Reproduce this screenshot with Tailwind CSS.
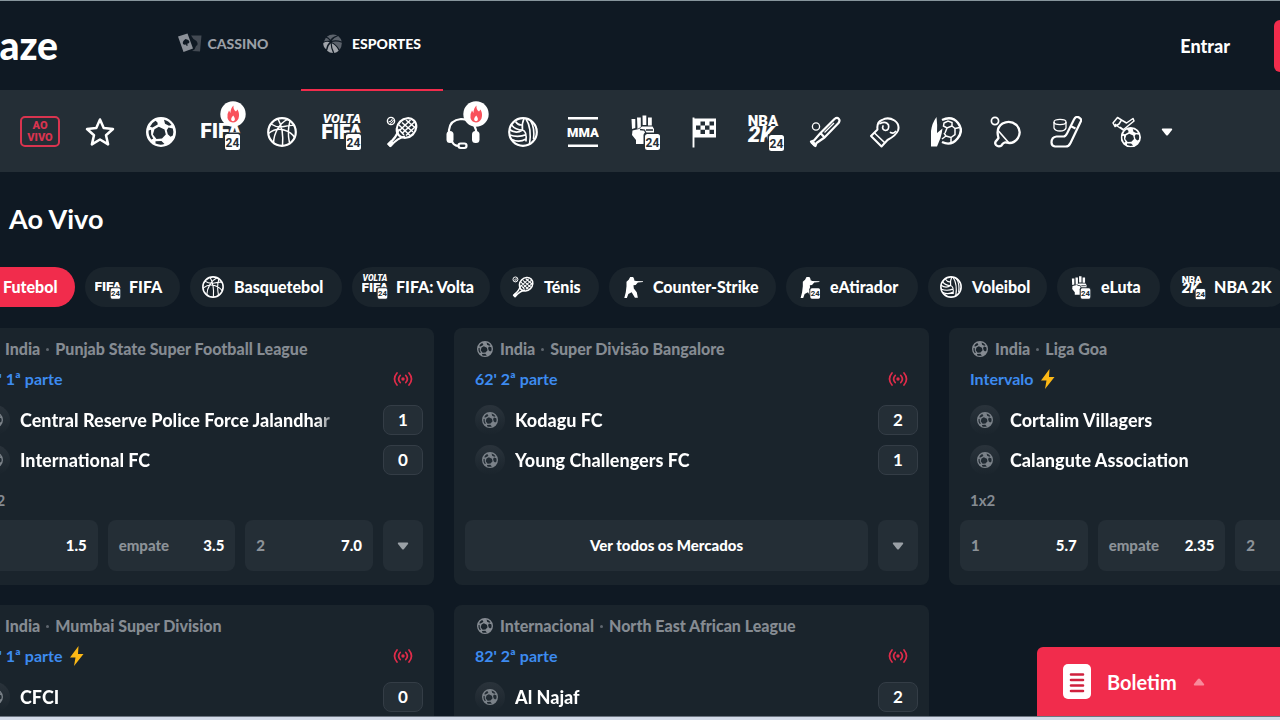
<!DOCTYPE html>
<html lang="pt-BR">
<head>
<meta charset="utf-8">
<meta name="viewport" content="width=device-width, initial-scale=1">
<title>Blaze - Esportes ao vivo</title>
<script src="https://cdn.jsdelivr.net/npm/@tailwindcss/browser@4"></script>
</head>
<body class="h-screen overflow-hidden bg-[#0f1923] font-['Lato','Open_Sans',sans-serif] text-white">

<!-- Icon set -->
<svg class="hidden" aria-hidden="true">
  <symbol id="i-star" viewBox="0 0 32 32"><path d="M16 3.5l3.7 8.6 9.3.9-7 6.2 2.1 9.2-8.1-4.9-8.1 4.9L10 19.2 3 13l9.300-.9z" fill="none" stroke="currentColor" stroke-width="2.500" stroke-linejoin="round"/></symbol>
  <symbol id="i-soccer" viewBox="0 0 30 30"><path fill="currentColor" fill-rule="evenodd" d="M15 0a15 15 0 1 1 0 30a15 15 0 1 1 0-30zM9.500 3.800L11.500 5.500 11.700 7.500 6.500 10.500 4 9.800Q6 5.500 9.500 3.800zM18 2.800Q22.500 3.800 25.500 8L23 8.800 19 6.800zM8.500 12.200L12.800 9.800 18.500 12.500 19.800 17.500 16 21.500 10.500 22 6.900 17.500zM22.500 10.500L26.800 11.500Q28 15 26.800 18.500L24.500 19.800 21.800 17.300 20.800 13.200zM2.600 13.500L5 12.800 5.200 17.800 7.300 21.800 5.200 22.500Q2.200 18.500 2.600 13.500zM9.500 24.200L15.500 24 18.500 27Q14 28.500 9.500 26.500z"/></symbol>
  <symbol id="i-basket" viewBox="0 0 30 30"><g fill="none" stroke="currentColor"><circle cx="15" cy="15" r="13.800" stroke-width="2.200"/><path stroke-width="1.500" d="M11 1.800C14 7 16.500 17 15.500 28.800M20.500 2.300C13 6 7 15 6.500 26M4 7Q10 11 17 9.500T27.500 8.500M1.500 16.500Q9 10.500 17 13T27.500 20.500M23 4Q20 14 22.500 26"/></g></symbol>
  <symbol id="i-tennis" viewBox="0 0 32 32"><g fill="none" stroke="currentColor"><ellipse cx="20.500" cy="12" rx="10.500" ry="9" transform="rotate(-45 20.500 12)" stroke-width="2.200"/><path stroke-width="1.500" d="M16 6.500L27 16M13 9L24 19.500M20 4L29.500 12M12.500 13L18 19M13.500 14.500L24.500 4M16.500 17L28.500 6M20 19.500L30 10"/><path d="M12.300 14Q11 21 2.500 28l2 2Q12 21.500 19 20.500" stroke-width="2.200" stroke-linejoin="round"/><path d="M2.500 29.500l4-4" stroke-width="4"/><circle cx="5" cy="5" r="3.600" stroke-width="1.400"/><path d="M2.500 6Q5.500 6 6.500 2.500M4 7.500Q6.500 7 7.500 4" stroke-width="1"/></g></symbol>
  <symbol id="i-headset" viewBox="0 0 36 36"><g fill="none" stroke="currentColor" stroke-width="2.200"><path d="M4 20V16Q5 6 16 5Q28 5 31 16v4"/><path d="M6.500 26Q8 32 14 32"/><rect x="13.500" y="29.500" width="8" height="4.500" rx="2.200"/></g><rect x="1.500" y="17" width="7" height="12" rx="3.500" fill="currentColor"/><rect x="27" y="17" width="7.500" height="12" rx="3.500" fill="currentColor"/></symbol>
  <symbol id="i-volley" viewBox="0 0 30 30"><g fill="none" stroke="currentColor"><circle cx="15" cy="15" r="13.800" stroke-width="2.200"/><path stroke-width="1.600" d="M14.500 13Q13.500 7 16 1.500M14.500 13Q7.500 13 3.500 8M14 8Q10 8.500 7.500 4.500M18 2Q24 11 21.500 27.500M22.500 3.500Q27 11 25.500 22M14.500 13Q19 14 18 24.500M14.500 13Q8 17.500 1.500 12.500M2 18Q10 21 18.500 17.500M4 22.500Q11 26 18 22"/></g></symbol>
  <symbol id="i-badge24" viewBox="0 0 16 17"><rect x=".5" y=".5" width="15" height="16" rx="2.500" fill="#fff"/><text x="8" y="13" text-anchor="middle" font-family="Roboto, sans-serif" font-weight="700" font-size="12" fill="#242e36">24</text></symbol>
  <symbol id="i-fifa" viewBox="0 0 40 40"><text x="20" y="25.500" text-anchor="middle" font-family="Roboto, sans-serif" font-weight="900" font-size="21" fill="currentColor">FIFA</text><rect x="22.500" y="20.500" width="18" height="19" rx="3" fill="#242e36"/><use href="#i-badge24" x="23.500" y="21.500" width="16" height="17"/></symbol>
  <symbol id="i-volta" viewBox="0 0 40 40"><text x="20" y="10.500" text-anchor="middle" font-family="Roboto, sans-serif" font-weight="900" font-style="italic" font-size="13" fill="currentColor">VOLTA</text><text x="20" y="27" text-anchor="middle" font-family="Roboto, sans-serif" font-weight="900" font-size="21" fill="currentColor">FIFA</text><rect x="22.500" y="20.500" width="18" height="19" rx="3" fill="#242e36"/><use href="#i-badge24" x="23.500" y="21.500" width="16" height="17"/></symbol>
  <symbol id="i-nba" viewBox="0 0 40 40"><text x="18" y="13.500" text-anchor="middle" font-family="Roboto, sans-serif" font-weight="900" font-size="15" fill="currentColor">NBA</text><text x="16" y="29.500" text-anchor="middle" font-family="Roboto, sans-serif" font-weight="900" font-style="italic" font-size="22" fill="currentColor">2K</text><rect x="22.500" y="21.500" width="18" height="19" rx="3" fill="#242e36"/><use href="#i-badge24" x="23.500" y="22.500" width="16" height="17"/></symbol>
  <symbol id="i-mma" viewBox="0 0 32 32"><path d="M1 2.200h30M1 29.800h30" stroke="currentColor" stroke-width="2.400"/><text x="16" y="20.500" text-anchor="middle" font-family="Roboto, sans-serif" font-weight="900" font-size="13" fill="currentColor">MMA</text></symbol>
  <symbol id="i-fist" viewBox="0 0 40 40"><path fill="currentColor" d="M7.500 7h3.800v9l-3.300 1zM13 5.500h3.800V15l-3.300 2zM18.500 3.500h3.800V13h-3.600zM24 5.500h3.800v8H24zM8.500 18.500l6.500-1.500 3-2.500h10.500L30 17v6l-4 9H12v-4L8 23z"/><path d="M16 17.500l4.500.5 1.500 3.500M22 18h7" stroke="#242e36" stroke-width="1.300" fill="none"/><rect x="19.500" y="20.500" width="18" height="19" rx="3" fill="#242e36"/><use href="#i-badge24" x="20.500" y="21.500" width="16" height="17"/></symbol>
  <symbol id="i-flag" viewBox="0 0 32 32"><path d="M5.500 1.500v30" stroke="currentColor" stroke-width="1.900"/><path fill="currentColor" fill-rule="evenodd" d="M6 2.500h22v19H6zM12.500 5.500v4h4.500v-4zM21.500 5.500v4H26v-4zM8 9.500v4.300h4.500V9.500zM17 9.500v4.300h4.500V9.500zM12.500 13.800v4.300H17v-4.300zM21.500 13.800v4.300H26v-4.300z"/></symbol>
  <symbol id="i-bat" viewBox="0 0 32 32"><g fill="none" stroke="currentColor" stroke-linejoin="round"><path stroke-width="2.200" d="M25.500 3Q28 1 29.700 2.700T29.500 7L15.500 21.500 7.500 27 6.500 30 2 25.500 5 24.500 11.500 17zM11.500 17l4 4.500"/><path d="M15.500 16.500L25 7" stroke-width="1.300"/><path d="M2.500 25.500l4 4" stroke-width="3.500"/><circle cx="7" cy="10.500" r="3.600" stroke-width="1.300"/></g></symbol>
  <symbol id="i-glove" viewBox="0 0 32 32"><g fill="none" stroke="currentColor" stroke-width="2" stroke-linejoin="round" stroke-linecap="round"><path d="M2 20L8.500 13.500Q7.500 6 13 4Q19 .5 25.500 4.500Q31 8.500 29 14.500Q27 19.500 18.500 24L12.500 30.500z"/><path d="M5.500 17l10 9.500M11 7.500Q17 4.500 19.500 9Q20.500 14 16.500 14.500Q12.500 13.500 14 10M21.500 16.500Q24.500 18 26.500 15.500" stroke-width="1.700"/></g></symbol>
  <symbol id="i-handball" viewBox="0 0 32 32"><path fill="currentColor" d="M6.500 1Q7.500 8 7 17L12.500 12.500Q12 17 10.500 22L7 30.500H1V15Q2 7 6.500 1z"/><g fill="none" stroke="currentColor"><path d="M12 4Q22-.5 28 7T27.500 22.500T12 26" stroke-width="2.400"/><path stroke-width="1.500" d="M14 7l4-2 4 1.500V10l-5 2-3.500-2zM22 10l3 2.500v6l-4 3-5-1.500-2-3M25 12.500l4.500-1M21 21.500v5M16 20l-4 3M17 12l-2 5"/></g></symbol>
  <symbol id="i-pingpong" viewBox="0 0 32 32"><g fill="none" stroke="currentColor" stroke-linejoin="round"><path stroke-width="2.300" d="M8.500 22Q5.500 12 12.500 7.500Q20 3.500 26.500 9Q32 15 28 22Q23.500 28.500 16.500 26.500Q13.500 26 11.500 29.500Q8.500 31.500 6 29Q4 26.500 7 24z"/><path stroke-width="1.600" d="M8.500 15L19 27"/><circle cx="5" cy="5" r="3.600" stroke-width="1.700"/></g></symbol>
  <symbol id="i-hockey" viewBox="0 0 32 32"><g fill="none" stroke="currentColor" stroke-linejoin="round"><path stroke-width="2.200" d="M24 3.500Q26-.5 29 1.500T31 5L20.500 27Q19 30.500 15.500 30.500H5Q1.500 30 1.500 26.500Q1.500 21 6.500 20.500H13.500Q15.500 20.500 17 17.500zM20.500 10l5 2.500"/><ellipse cx="10" cy="6" rx="6" ry="2.600" stroke-width="1.300"/><path d="M4 6v6q1 3 6 3t6-3V6" stroke-width="1.300"/></g></symbol>
  <symbol id="i-whistle" viewBox="0 0 32 32"><g fill="none" stroke="currentColor" stroke-width="1.500" stroke-linejoin="round"><path d="M6.500 1.500L10.500 4 8 8 4 10.500 2 7zM10.500 4l5 3L22 2.500 23 5 12 14 7 10.500 4 8M9 11l4 3"/></g><svg x="9.500" y="11" width="20.500" height="20.500"><use href="#i-soccer"/></svg></symbol>
  <symbol id="i-shooter" viewBox="0 0 30 30"><path fill="currentColor" d="M10.500 5l2-3.500h4L18 4v2l2.500.8 9.500.3v1l-7 .7-3 3.500-3 .2.500 4.500 4 5 1.500 7.500h-4L14.500 22 10 24.500 8 30H4.500l2-8 1-8V8z"/></symbol>
  <symbol id="i-shooter24" viewBox="0 0 40 40"><svg x="1" y="3" width="36" height="34"><use href="#i-shooter"/></svg><rect x="20.500" y="20.500" width="18" height="19" rx="3" fill="#1a232b"/><use href="#i-badge24" x="21.500" y="21.500" width="16" height="17"/></symbol>
  <symbol id="i-flame" viewBox="0 0 26 26"><circle cx="13" cy="13" r="12.700" fill="#fff"/><path fill="#f9515b" d="M13.500 4.500Q13 8.500 16 10.500L17.500 8.500Q20 13 18.500 17.500Q16.500 21.500 13 21.500Q8.500 21 7.500 17Q6.800 13 9 9.500L10.500 12Q10.500 7 13.500 4.500z"/><path fill="#fff" d="M13.200 14.500q2.500 3 1.300 5q-1.500 1.500-3 0q-1.200-2 1.700-5z"/></symbol>
  <symbol id="i-live" viewBox="0 0 20 16"><g fill="none" stroke="currentColor" stroke-width="1.700" stroke-linecap="round"><path d="M4 2Q-1 8 4 14M7.200 4.500Q4 8 7.200 11.500M16 2Q21 8 16 14M12.800 4.500Q16 8 12.800 11.500"/></g><circle cx="10" cy="8" r="1.700" fill="currentColor"/></symbol>
  <symbol id="i-bolt" viewBox="0 0 14 20"><path fill="#fcb815" d="M8.500 0L0 11.500h5.500L4 20 13.500 8H8z"/></symbol>
  <symbol id="i-down" viewBox="0 0 12 8"><path d="M1.500.5h9q1.200.3.500 1.500L7 7Q6 8 5 7L1 2Q.3.800 1.500.5z" fill="currentColor"/></symbol>
  <symbol id="i-cards" viewBox="0 0 24 20"><path fill="#8c9199" fill-rule="evenodd" d="M0 3.500L9.500.5 15 15.500 5.500 19zM7.500 6Q4 8.500 5 11q1.500 1.500 3 .3l.6 1.700 1.200-.5-.6-1.700q2 0 2.300-1.800Q11 6.500 7.500 6z"/><path fill="#434a53" d="M13 2.500h10.500L22 18.500 14 18l2.500-1.500L18 13q3-1.500.5-5l-3-2z"/></symbol>
  <symbol id="i-ball" viewBox="0 0 20 20"><path fill="#5c636c" d="M4 3Q9-1 15 1.500Q9.500 3 7.800 6Q6 3.500 4 3zM3 4Q5.500 4.500 7.200 7.200Q4 6.500 1 8zM16 2Q19 4.500 19.700 8Q14 5.500 9 7.200Q11.500 3.500 16 2zM19.900 9.300Q19.700 14 17.500 16.700Q14 10.500 9 8.500Q14 6.800 19.900 9.300z"/><path fill="#a0a4aa" d="M.3 9.500Q4 7.500 7 8.800Q4 11 3.300 16Q0 13.500.3 9.500zM8 9.700Q8 15 10.500 20Q7 20 4.300 17.500Q5 12.500 8 9.700zM9.200 9.700Q14 12 16.500 17.500Q14.500 19.500 12 20Q9.300 15 9.200 9.700z"/></symbol>
  <symbol id="i-slip" viewBox="0 0 28 35"><rect width="28" height="35" rx="5" fill="#fff"/><path d="M8 10.500h12M8 16h12M8 21.500h12M8 27h12" stroke="#d0213d" stroke-width="2.600" stroke-linecap="round"/></symbol>
</svg>

<header class="flex h-[91px] border-t border-b border-t-[#87959c] border-b-[#242e36]">
  <a href="#" class="-ml-[36px] mt-5 h-12 w-[94px] text-right text-[39px] leading-[48px] font-black" aria-label="Blaze"><span>blaze</span></a>
  <nav class="ml-[94px] flex" aria-label="Principal">
    <a href="#" class="flex h-[84px] w-[142px] items-center justify-center gap-1.5 text-[14px] font-black text-[#9a9fa6]"><svg class="h-5 w-6"><use href="#i-cards"/></svg>CASSINO</a>
    <a href="#" aria-current="page" class="relative ml-[7px] flex h-[84px] w-[142px] items-center justify-center gap-2.5 text-[14px] font-black"><svg class="size-[19px]"><use href="#i-ball"/></svg>ESPORTES<span class="absolute inset-x-0 top-[88px] h-[2px] bg-[#f12c4c]"></span></a>
  </nav>
  <div class="ml-auto flex h-[90px] items-center gap-11">
    <a href="#" class="text-[18px] font-black">Entrar</a>
    <button type="button" class="h-[52px] w-1.5 rounded-l-md bg-[#f12c4c]" aria-label="Cadastre-se"></button>
  </div>
</header>

<nav class="flex h-[81px] items-center bg-[#242e36]" aria-label="Esportes">
  <ul class="flex h-10 flex-1 items-center justify-between pl-5">
    <li><a href="#" class="flex h-[31px] w-10 flex-col items-center justify-center rounded-[5px] border-2 border-[#d9344f] font-['Roboto',sans-serif] text-[11px] leading-[12px] font-black text-[#d9344f]"><span>AO</span><span>VIVO</span></a></li>
    <li><a href="#" class="flex w-10 justify-center" aria-label="Favoritos"><svg class="size-8"><use href="#i-star"/></svg></a></li>
    <li><a href="#" class="flex w-10 justify-center" aria-label="Futebol"><svg class="size-[30px]"><use href="#i-soccer"/></svg></a></li>
    <li><a href="#" class="relative flex w-10 justify-center" aria-label="FIFA"><svg class="size-10"><use href="#i-fifa"/></svg><svg class="absolute -top-[11px] left-[19px] size-[26px]"><use href="#i-flame"/></svg></a></li>
    <li><a href="#" class="flex w-10 justify-center" aria-label="Basquetebol"><svg class="size-[30px]"><use href="#i-basket"/></svg></a></li>
    <li><a href="#" class="flex w-10 justify-center" aria-label="FIFA: Volta"><svg class="size-10"><use href="#i-volta"/></svg></a></li>
    <li><a href="#" class="flex w-10 justify-center" aria-label="Ténis"><svg class="size-8"><use href="#i-tennis"/></svg></a></li>
    <li><a href="#" class="relative flex w-10 justify-center" aria-label="Counter-Strike"><svg class="size-9"><use href="#i-headset"/></svg><svg class="absolute -top-[13px] left-5 size-[26px]"><use href="#i-flame"/></svg></a></li>
    <li><a href="#" class="flex w-10 justify-center" aria-label="Voleibol"><svg class="size-[30px]"><use href="#i-volley"/></svg></a></li>
    <li><a href="#" class="flex w-10 justify-center" aria-label="MMA"><svg class="size-8"><use href="#i-mma"/></svg></a></li>
    <li><a href="#" class="flex w-10 justify-center" aria-label="eLuta"><svg class="size-10"><use href="#i-fist"/></svg></a></li>
    <li><a href="#" class="flex w-10 justify-center" aria-label="Automobilismo"><svg class="size-8"><use href="#i-flag"/></svg></a></li>
    <li><a href="#" class="flex w-10 justify-center" aria-label="NBA 2K"><svg class="size-10"><use href="#i-nba"/></svg></a></li>
    <li><a href="#" class="flex w-10 justify-center" aria-label="Beisebol"><svg class="size-8"><use href="#i-bat"/></svg></a></li>
    <li><a href="#" class="flex w-10 justify-center" aria-label="Boxe"><svg class="size-8"><use href="#i-glove"/></svg></a></li>
    <li><a href="#" class="flex w-10 justify-center" aria-label="Andebol"><svg class="size-8"><use href="#i-handball"/></svg></a></li>
    <li><a href="#" class="flex w-10 justify-center" aria-label="Ténis de mesa"><svg class="size-8"><use href="#i-pingpong"/></svg></a></li>
    <li><a href="#" class="flex w-10 justify-center" aria-label="Hóquei"><svg class="size-8"><use href="#i-hockey"/></svg></a></li>
    <li><a href="#" class="flex w-10 justify-center" aria-label="Futsal"><svg class="size-8"><use href="#i-whistle"/></svg></a></li>
  </ul>
  <button type="button" class="mr-[103px] ml-2.5 flex h-10 w-5 items-center justify-center" aria-label="Mais esportes"><svg class="h-2 w-3"><use href="#i-down"/></svg></button>
</nav>

<main>
  <h1 class="mt-[29px] pl-[9px] text-[27px] leading-9 font-bold">Ao Vivo</h1>

  <div class="-ml-[41px] mt-[30px] flex gap-2.5 text-[16px] font-black [&>button]:flex [&>button]:h-10 [&>button]:shrink-0 [&>button]:items-center [&>button]:gap-2 [&>button]:rounded-full [&>button]:pl-2.5 [&>button]:whitespace-nowrap [&_svg]:size-[26px] [&_svg]:shrink-0">
    <button type="button" class="w-[116px] bg-[#f12c4c]"><svg><use href="#i-soccer"/></svg>Futebol</button>
    <button type="button" class="w-[95px] bg-[#1a242c]"><svg><use href="#i-fifa"/></svg>FIFA</button>
    <button type="button" class="w-[152px] bg-[#1a242c]"><svg class="p-[2px]"><use href="#i-basket"/></svg>Basquetebol</button>
    <button type="button" class="w-[138px] bg-[#1a242c]"><svg><use href="#i-volta"/></svg>FIFA: Volta</button>
    <button type="button" class="w-[99px] bg-[#1a242c]"><svg class="p-[2px]"><use href="#i-tennis"/></svg>Ténis</button>
    <button type="button" class="w-[167px] bg-[#1a242c]"><svg class="p-[2px]"><use href="#i-shooter"/></svg>Counter-Strike</button>
    <button type="button" class="w-[132px] bg-[#1a242c]"><svg><use href="#i-shooter24"/></svg>eAtirador</button>
    <button type="button" class="w-[119px] bg-[#1a242c]"><svg class="p-[2px]"><use href="#i-volley"/></svg>Voleibol</button>
    <button type="button" class="w-[103px] bg-[#1a242c]"><svg><use href="#i-fist"/></svg>eLuta</button>
    <button type="button" class="w-[118px] bg-[#1a242c]"><svg><use href="#i-nba"/></svg>NBA 2K</button>
  </div>

  <div id="events" class="-mr-[144px] -ml-[41px] mt-[21px] grid grid-cols-3 gap-5"></div>
</main>

<button type="button" class="fixed right-0 bottom-0 flex h-[73px] w-[243px] items-center gap-4 rounded-tl-md bg-[#f12c4c] pb-1 pl-[26px] text-[20px] font-bold"><svg class="h-[35px] w-7"><use href="#i-slip"/></svg>Boletim<svg class="h-2 w-3 rotate-180 text-[#f98a9b]"><use href="#i-down"/></svg></button>
<div class="fixed inset-x-0 bottom-0 h-1 border-t border-[#6b7480] bg-[#d3dae8]"></div>

<script>
const events = [
  { place: 'India', league: 'Punjab State Super Football League', time: "12' 1ª parte", live: true, teams: [['Central Reserve Police Force Jalandhar', 1], ['International FC', 0]], odds: ['1.5', '3.5', '7.0'] },
  { place: 'India', league: 'Super Divisão Bangalore', time: "62' 2ª parte", live: true, teams: [['Kodagu FC', 2], ['Young Challengers FC', 1]] },
  { place: 'India', league: 'Liga Goa', time: 'Intervalo', bolt: true, live: true, teams: [['Cortalim Villagers', 0], ['Calangute Association', 0]], odds: ['5.7', '2.35', '2.7'] },
  { place: 'India', league: 'Mumbai Super Division', time: "12' 1ª parte", bolt: true, live: true, teams: [['CFCI', 0], ['Millat FC', 0]], odds: ['1.8', '3.2', '4.1'] },
  { place: 'Internacional', league: 'North East African League', time: "82' 2ª parte", live: true, teams: [['Al Najaf', 2], ['Al Talaba', 0]] }
];
const team = ([name, score]) => `
  <div class="flex h-[30px] items-center pl-2.5">
    <span class="flex size-[30px] shrink-0 items-center justify-center rounded-full bg-linear-to-b from-[#2a333b] to-[#1a242c] text-[#7b8289]"><svg class="size-4"><use href="#i-soccer"/></svg></span>
    <span class="mr-12 ml-2.5 min-w-0 flex-1 overflow-hidden bg-linear-to-r from-white from-94% to-white/30 bg-clip-text text-[18px] leading-[30px] font-black whitespace-nowrap text-transparent">${name}</span>
    <span class="flex h-[30px] w-10 shrink-0 items-center justify-center rounded-lg border border-[#343d46] bg-[#242e36] text-[17px] font-bold">${score}</span>
  </div>`;
const odd = (label, value) => `
  <button type="button" class="flex h-[51px] flex-1 items-center justify-between rounded-lg bg-[#242e36] px-[11px]"><span class="text-[#8c9298]">${label}</span><span>${value}</span></button>`;
document.getElementById('events').innerHTML = events.map(e => `
  <article class="flex min-w-0 flex-col rounded-lg bg-[#1a242c] px-[11px] pt-[11px] pb-3.5">
    <div class="flex h-5 items-center pl-3 text-[16px] font-black text-[#858b92]"><svg class="mr-[7px] size-4 shrink-0"><use href="#i-soccer"/></svg>${e.place}<span class="mx-1.5 size-[3px] rounded-full bg-[#5f666e]"></span>${e.league}</div>
    <div class="mt-2.5 flex h-5 items-center pl-2.5 text-[16px] font-bold text-[#3d8bf0]">${e.time}${e.bolt ? '<svg class="ml-2 h-5 w-3.5"><use href="#i-bolt"/></svg>' : ''}<span class="ml-auto flex w-10 justify-center text-[#e02c4a]"><svg class="h-4 w-5"><use href="#i-live"/></svg></span></div>
    <div class="mt-4 flex flex-col gap-2.5">${e.teams.map(team).join('')}</div>
    <div class="mt-[15px] h-5 pl-2.5 text-[15px] leading-5 font-bold text-[#858b92]">${e.odds ? '1x2' : ''}</div>
    <div class="mt-2.5 flex gap-2.5 text-[15px] font-black">
      ${e.odds ? odd('1', e.odds[0]) + odd('empate', e.odds[1]) + odd('2', e.odds[2]) : '<button type="button" class="h-[51px] flex-1 rounded-lg bg-[#242e36]">Ver todos os Mercados</button>'}
      <button type="button" class="flex h-[51px] w-10 items-center justify-center rounded-lg bg-[#242e36] text-[#9aa0a6]" aria-label="Mostrar mercados"><svg class="h-2 w-3"><use href="#i-down"/></svg></button>
    </div>
  </article>`).join('');
</script>
</body>
</html>
